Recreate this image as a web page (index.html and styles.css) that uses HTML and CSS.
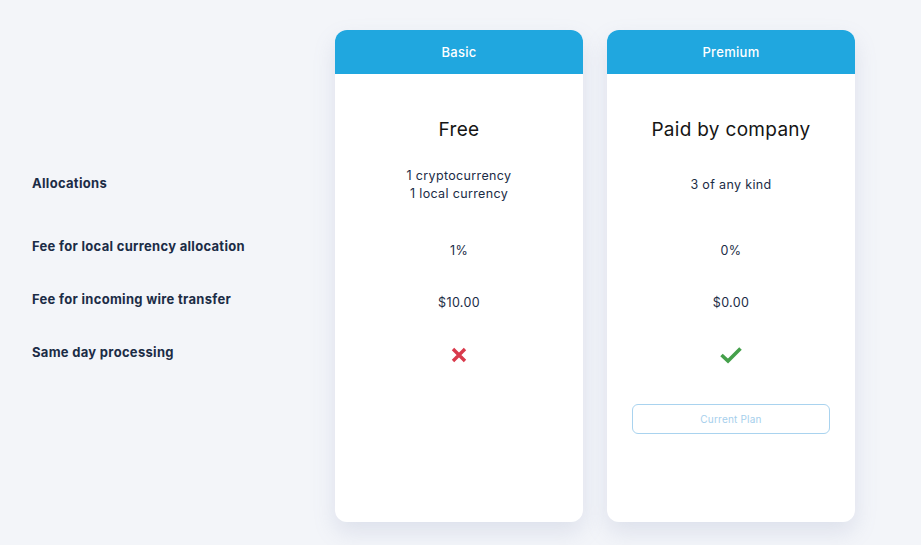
FILE: index.html
```html
<!DOCTYPE html>
<html lang="en">
<head>
<meta charset="utf-8">
<title>Plans</title>
<link rel="stylesheet" href="styles.css">
</head>
<body>
<main class="page">
  <div class="labels">
    <div class="label-row label-first">Allocations</div>
    <div class="label-row">Fee for local currency allocation</div>
    <div class="label-row">Fee for incoming wire transfer</div>
    <div class="label-row">Same day processing</div>
  </div>
  <section class="card">
    <header class="card-head">Basic</header>
    <div class="card-body">
      <div class="plan-title">Free</div>
      <div class="row row-first">1 cryptocurrency<br>1 local currency</div>
      <div class="row">1%</div>
      <div class="row">$10.00</div>
      <div class="row">
        <svg class="icon" width="18" height="18" viewBox="0 0 18 18"><path d="M3 3 L15 15 M15 3 L3 15" stroke="#d93a4c" stroke-width="3.4" stroke-linecap="butt" fill="none"/></svg>
      </div>
    </div>
  </section>
  <section class="card">
    <header class="card-head">Premium</header>
    <div class="card-body">
      <div class="plan-title">Paid by company</div>
      <div class="row row-first">3 of any kind</div>
      <div class="row">0%</div>
      <div class="row">$0.00</div>
      <div class="row">
        <svg class="icon" width="24" height="18" viewBox="0 0 24 18"><path d="M2.5 9 L9 15 L21.5 2.5" stroke="#45a04b" stroke-width="3.6" stroke-linecap="butt" stroke-linejoin="miter" fill="none"/></svg>
      </div>
      <div class="btn-wrap"><button class="btn-current" type="button">Current Plan</button></div>
    </div>
  </section>
</main>
</body>
</html>
```
FILE: styles.css
```css
html, body {
  margin: 0;
  padding: 0;
}
body {
  background: #f3f5f9;
  font-family: "Inter", "Noto Sans", "Liberation Sans", sans-serif;
  color: #1b2c46;
  width: 921px;
  height: 545px;
  overflow: hidden;
}
.page {
  display: flex;
  align-items: flex-start;
  padding-top: 30px;
}
.labels {
  width: 303px;
  padding-left: 32px;
  padding-top: 117px;
  display: flex;
  flex-direction: column;
}
.label-row {
  height: 53px;
  display: flex;
  align-items: center;
  font-size: 13px;
  font-weight: 700;
  color: #1b2c46;
  letter-spacing: 0.3px;
}
.label-row.label-first {
  height: 72px;
}
.card {
  width: 248px;
  height: 492px;
  background: #ffffff;
  border-radius: 12px;
  box-shadow: 0 10px 22px rgba(120, 135, 180, 0.18);
  margin-right: 24px;
  overflow: hidden;
  display: flex;
  flex-direction: column;
}
.card-head {
  height: 44px;
  background: #20a7df;
  color: #ffffff;
  font-size: 13px;
  font-weight: 500;
  letter-spacing: 0.3px;
  display: flex;
  align-items: center;
  justify-content: center;
}
.card-body {
  padding: 42px 25px 0;
  display: flex;
  flex-direction: column;
  align-items: stretch;
}
.plan-title {
  height: 28px;
  line-height: 28px;
  text-align: center;
  font-size: 19px;
  font-weight: 400;
  letter-spacing: 0.3px;
  color: #151515;
}
.row {
  height: 52px;
  display: flex;
  align-items: center;
  justify-content: center;
  text-align: center;
  font-size: 12.5px;
  line-height: 18px;
  letter-spacing: 0.35px;
  color: #1b2c46;
}
.row.row-first {
  height: 81px;
}
.icon {
  display: block;
}
.btn-wrap {
  margin-top: 23px;
}
.btn-current {
  width: 198px;
  height: 30px;
  background: #ffffff;
  border: 1px solid #a9d3ef;
  border-radius: 6px;
  color: #a6cfec;
  font-family: inherit;
  font-size: 10px;
  letter-spacing: 0.2px;
  padding: 0;
}
```
